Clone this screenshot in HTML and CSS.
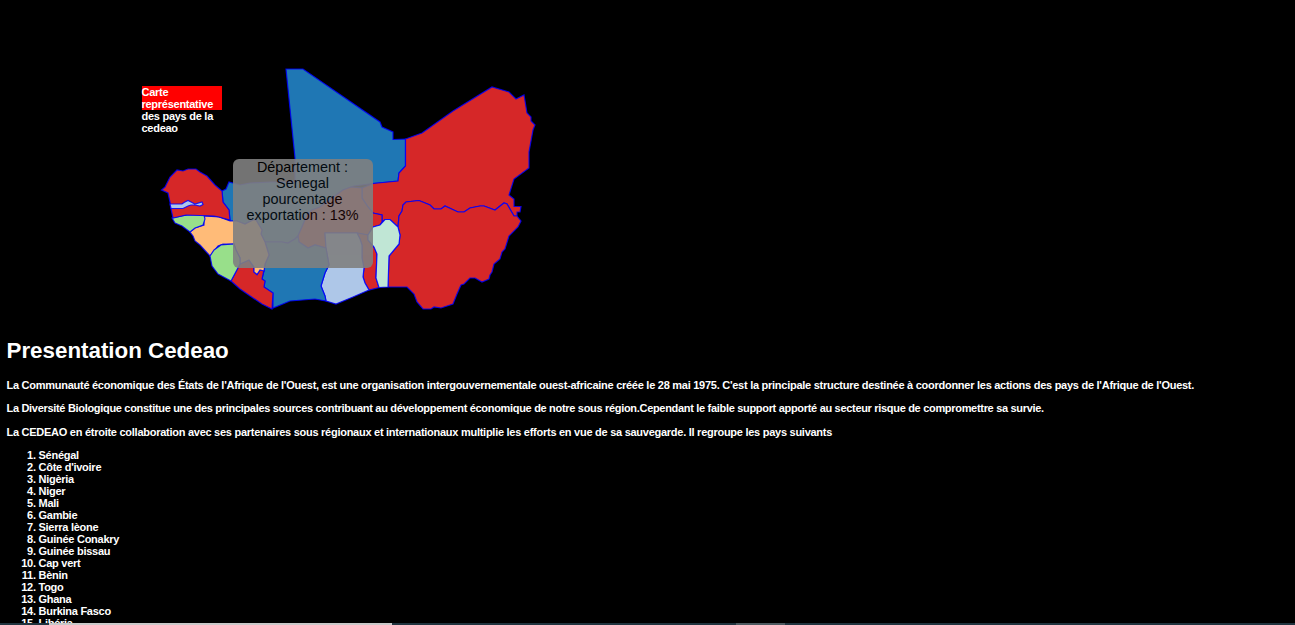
FILE: index.html
```html
<!DOCTYPE html>
<html lang="fr">
<head>
<meta charset="utf-8">
<title>Presentation Cedeao</title>
<link rel="stylesheet" href="styles.css">
</head>
<body>
<section class="map-area">
  <svg class="map" width="600" height="330" viewBox="0 0 600 330">
    <g class="countries">
      <path class="blue" d="M286 69H303L380 122 382 127 393 132V139.5L405.5 139V166L399 173 398 181 373 183.5 354 186 343 190 332 198 320 207 312 210 307 215 302 227 298 236 295 239 288 243 282 242 265 242 261 234 262 230 256 220 253 220 245 224 237 221 230 221 229 210 223 202 222 191 226 189 229 182 240 185 250 183 270 182H295V158Z"/>
      <path class="red" d="M405.5 139L422 133 453 111 492 87 509 92 516 99 524 95 527 113 531 117V121L535 125 533 130 529 152V168L514 179 509 195 514 199V206.500H521L520 212H517V216H514L507 204 504 203 495 210 484 206H480L470 208 464 212H458L445 206 441 209H434L430 205 419 200.500 406 202 403 205 402 211 399 216 398 227 390 219.500H385L382 222V215L373 213 368 207 362 198V188L373 183.500 398 181 399 173 405.500 166Z"/>
      <path class="red" d="M398 227L399 216 402 211 403 205 406 202 419 200.500 430 205 434 209H441L445 206 458 212H464L470 208 480 206H484L495 210 504 203 507 204 514 216H517L521 221 518 227 509 236 505 249 502 252 500 259 494 264 492 272 490 275 489 279 482 282 475 278H470L464 284 461 285 457 294 453 304 441 308 434 307 431 309H423L417 302 414 294 407 287H388L389 256 399 244 400 235Z"/>
      <path class="red" d="M362 188L351 187 343 190 332 198 320 207 312 210 307 215 302 227 298 236 299 242 308 248 315 245 326 248 325 233H357L368 235 373 227 380 225 382 222V215L373 213 368 207 362 198Z"/>
      <path class="red" d="M357 233L368 235V240L374 247 377 254 376 278 379 287.500 369 290 365 283 363 277 364 268 362 258V245L360 239Z"/>
      <path class="mint" d="M373 227L380 225 385 219.500H390L398 227 400 235 399 244 389 256 388 287 379 287.500 376 278 377 254 374 247 368 240V235Z"/>
      <path class="light-blue" d="M325 233H357L360 239 362 245V258L364 268 363 277 365 283 369 290 353 297 336 304 326 301 325 296 321 286 325 273 329 265 326 248Z"/>
      <path class="blue" d="M265 242H282L288 243 295 239 298 236 299 242 308 248 315 245 326 248 329 265 325 273 321 286 325 296 326 301 315 299 290 301 273 308 273 293 264 287 265 281 262 279 264 271 265 264 269 255Z"/>
      <path class="red" d="M231 281L240 264 249 260 254 268V272L257 274.500 260 270 264 270 262 279 265 281 264 287 273 293 272 309 262 304 240 289Z"/>
      <path class="orange" d="M190 232L195 228 204 225V216L219 217 230 221H237L245 224 253 220H256L262 230 261 234 265 242 269 255 265 264 264 271 260 270 257 274.500 254 272V267L249 260 240 264V258L236 250 234 244H223L218 246 210 256 200 245 195 241 193 236Z"/>
      <path class="green" d="M210 256L214 250 221 245 234 244 236 250 240 258V264L231 281 218 274 212 266Z"/>
      <path class="green" d="M172 218L187 215H204L205 219 203 225 195 228 190 232 182 226 175 223Z"/>
      <path class="red" d="M161.500 190L165 187 170 177 177 170 183 171 188 169H196L200 172 207 176 215 185 222 191 223 202 229 210 230 220 219 217 214 216 186 215 173 218 171 209 170 202 168 193Z"/>
      <path class="light-blue" d="M170 204L182 204 184 202.500 188 200.500 191 202 195 204 202 202 203 204.500 200 206 195 205 191 205 188 206 183 208.500 171 208.500Z"/>
    </g>
  </svg>
  <p class="map-title">Carte représentative des pays de la cedeao</p>
  <div class="tooltip">Département : Senegal<br>pourcentage exportation : 13%</div>
</section>
<main class="content">
  <h1>Presentation Cedeao</h1>
  <p>La Communauté économique des États de l'Afrique de l'Ouest, est une organisation intergouvernementale ouest-africaine créée le 28 mai 1975. C'est la principale structure destinée à coordonner les actions des pays de l'Afrique de l'Ouest.</p>
  <p class="sources">La Diversité Biologique constitue une des principales sources contribuant au développement économique de notre sous région.Cependant le faible support apporté au secteur risque de compromettre sa survie.</p>
  <p>La CEDEAO en étroite collaboration avec ses partenaires sous régionaux et internationaux multiplie les efforts en vue de sa sauvegarde. Il regroupe les pays suivants</p>
  <ol>
    <li>Sénégal</li><li>Côte d'ivoire</li><li>Nigèria</li><li>Niger</li><li>Mali</li>
    <li>Gambie</li><li>Sierra lèone</li><li>Guinée Conakry</li><li>Guinée bissau</li><li>Cap vert</li>
    <li>Bènin</li><li>Togo</li><li>Ghana</li><li>Burkina Fasco</li><li>Libéria</li>
  </ol>
</main>
<div class="bottom-bar"><span class="active-segment"></span><span class="idle-segment"></span></div>
</body>
</html>
```
FILE: styles.css
```css
body {
  margin: 0;
  height: 625px;
  overflow: hidden;
  background: #000;
  color: #fff;
  font: bold 11px/12px "Liberation Sans", Arial, sans-serif;
  letter-spacing: -.265px;
}
.map-area { position: relative; height: 330px; }
.map { display: block; }
.countries { stroke: #00f; stroke-width: 1.2; stroke-opacity: .85; }
.blue { fill: #1f77b4; }
.red { fill: #d62728; }
.mint { fill: #c0e6d5; }
.light-blue { fill: #aec7e8; }
.orange { fill: #ffbb78; }
.green { fill: #98df8a; }
.map-title {
  position: absolute;
  left: 141.500px;
  top: 86px;
  width: 80px;
  height: 24px;
  margin: 0;
  background: #f00;
}
.tooltip {
  position: absolute;
  left: 233px;
  top: 159px;
  width: 140px;
  height: 109px;
  box-sizing: border-box;
  padding: 0 10px 0 9px;
  border-radius: 6px;
  background: #808080;
  opacity: .9;
  color: #000;
  font-size: 14.400px;
  font-weight: normal;
  line-height: 16px;
  letter-spacing: 0;
  text-align: center;
}
.content { padding: 8px 6.500px 0; }
h1 { margin: 0 0 16px; font-size: 22.350px; line-height: 25px; letter-spacing: 0; }
p { margin: 0 0 11.400px; }
.content p { white-space: nowrap; }
.content .sources { letter-spacing: -.31px; }
ol { margin: 0; padding-left: 32px; }
.bottom-bar {
  position: fixed;
  left: 0;
  right: 0;
  bottom: 0;
  display: flex;
  height: 2px;
  padding-left: 49px;
  background: #20343f;
}
.active-segment { width: 343px; background: #c9c9c9; }
.idle-segment { width: 49px; margin-left: 344px; background: #4d5a60; }
```
